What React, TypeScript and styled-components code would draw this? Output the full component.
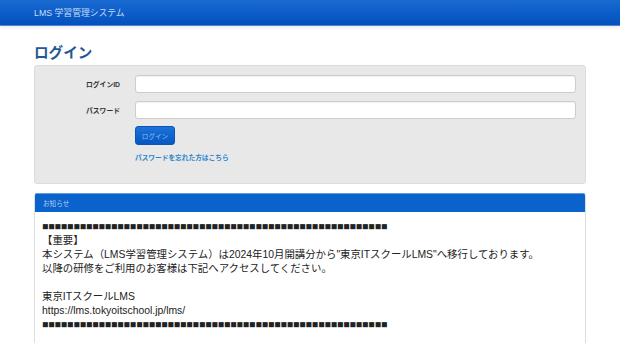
import React from "react";
import styled, { createGlobalStyle } from "styled-components";

const GlobalStyle = createGlobalStyle`
  html, body { margin: 0; padding: 0; background: #ffffff; }
  body {
    font-family: "Liberation Sans", "Noto Sans CJK JP", sans-serif;
    color: #333333;
  }
`;

const Navbar = styled.header`
  height: 25px;
  background: linear-gradient(to bottom, #1a6ad2 0%, #0b5cc8 55%, #0450bd 100%);
  border-bottom: 1px solid #4d86d3;
  box-shadow: 0 2px 3px rgba(0, 0, 0, 0.07);
  display: flex;
  align-items: center;
  padding-left: 34px;
`;

const Brand = styled.span`
  font-size: 8.8px;
  color: #c9dcf4;
`;

const Container = styled.main`
  width: 552px;
  margin: 0 0 0 34px;
  padding-top: 17px;
`;

const Title = styled.h1`
  margin: 0;
  font-size: 14.6px;
  line-height: 20px;
  font-weight: 700;
  color: #1f5a95;
`;

const Well = styled.section`
  margin-top: 2px;
  background: #e8e8e8;
  border: 1px solid #dcdcdc;
  border-radius: 3px;
  padding: 9px 9px 21px 0;
  display: grid;
  grid-template-columns: 85px 1fr;
  column-gap: 15px;
  row-gap: 8px;
`;

const Label = styled.label`
  font-size: 6.8px;
  font-weight: 700;
  color: #333333;
  text-align: right;
  align-self: center;
`;

const Input = styled.input`
  box-sizing: border-box;
  height: 18px;
  width: 100%;
  margin: 0;
  border: 1px solid #cccccc;
  border-radius: 3px;
  background: #ffffff;
  box-shadow: inset 0 1px 1px rgba(0, 0, 0, 0.06);
  outline: none;
`;

const Actions = styled.div`
  grid-column: 2;
  margin-top: -1px;
  display: flex;
  flex-direction: column;
  align-items: flex-start;
`;

const Button = styled.button`
  box-sizing: border-box;
  width: 40px;
  height: 19px;
  padding: 0;
  border: 1px solid #0b55b8;
  border-radius: 3px;
  background: linear-gradient(to bottom, #1c73d9 0%, #0557c2 100%);
  color: #8fbcee;
  font-family: inherit;
  font-size: 6.6px;
  cursor: pointer;
`;

const ForgotLink = styled.a`
  margin-top: 8px;
  font-size: 6.7px;
  line-height: 9px;
  font-weight: 700;
  color: #2a86cc;
  text-decoration: none;
`;

const Panel = styled.section`
  margin-top: 9px;
  border: 1px solid #dddddd;
  border-top: none;
  border-radius: 3px 3px 0 0;
  overflow: hidden;
`;

const PanelHeader = styled.div`
  height: 19px;
  background: #0a62cc;
  border-top: 1px solid #5f9be0;
  box-sizing: border-box;
  display: flex;
  align-items: center;
  padding-left: 8px;
  font-size: 6.6px;
  color: #b7cff0;
`;

const PanelBody = styled.div`
  background: #ffffff;
  padding: 8px 7px 20px 7px;
  font-size: 10.4px;
  line-height: 14px;
  color: #222222;
`;

const Line = styled.div`
  min-height: 14px;
`;

const squares = "■".repeat(55);

const lines = [
  squares,
  "【重要】",
  "本システム（LMS学習管理システム）は2024年10月開講分から\"東京ITスクールLMS\"へ移行しております。",
  "以降の研修をご利用のお客様は下記へアクセスしてください。",
  "",
  "東京ITスクールLMS",
  "https://lms.tokyoitschool.jp/lms/",
  squares,
];

export default function App() {
  return (
    <>
      <GlobalStyle />
      <Navbar>
        <Brand>LMS 学習管理システム</Brand>
      </Navbar>
      <Container>
        <Title>ログイン</Title>
        <Well>
          <Label htmlFor="loginId">ログインID</Label>
          <Input id="loginId" type="text" />
          <Label htmlFor="password">パスワード</Label>
          <Input id="password" type="password" />
          <Actions>
            <Button type="button">ログイン</Button>
            <ForgotLink href="#">パスワードを忘れた方はこちら</ForgotLink>
          </Actions>
        </Well>
        <Panel>
          <PanelHeader>お知らせ</PanelHeader>
          <PanelBody>
            {lines.map((l, i) => (
              <Line key={i}>{l}</Line>
            ))}
          </PanelBody>
        </Panel>
      </Container>
    </>
  );
}
